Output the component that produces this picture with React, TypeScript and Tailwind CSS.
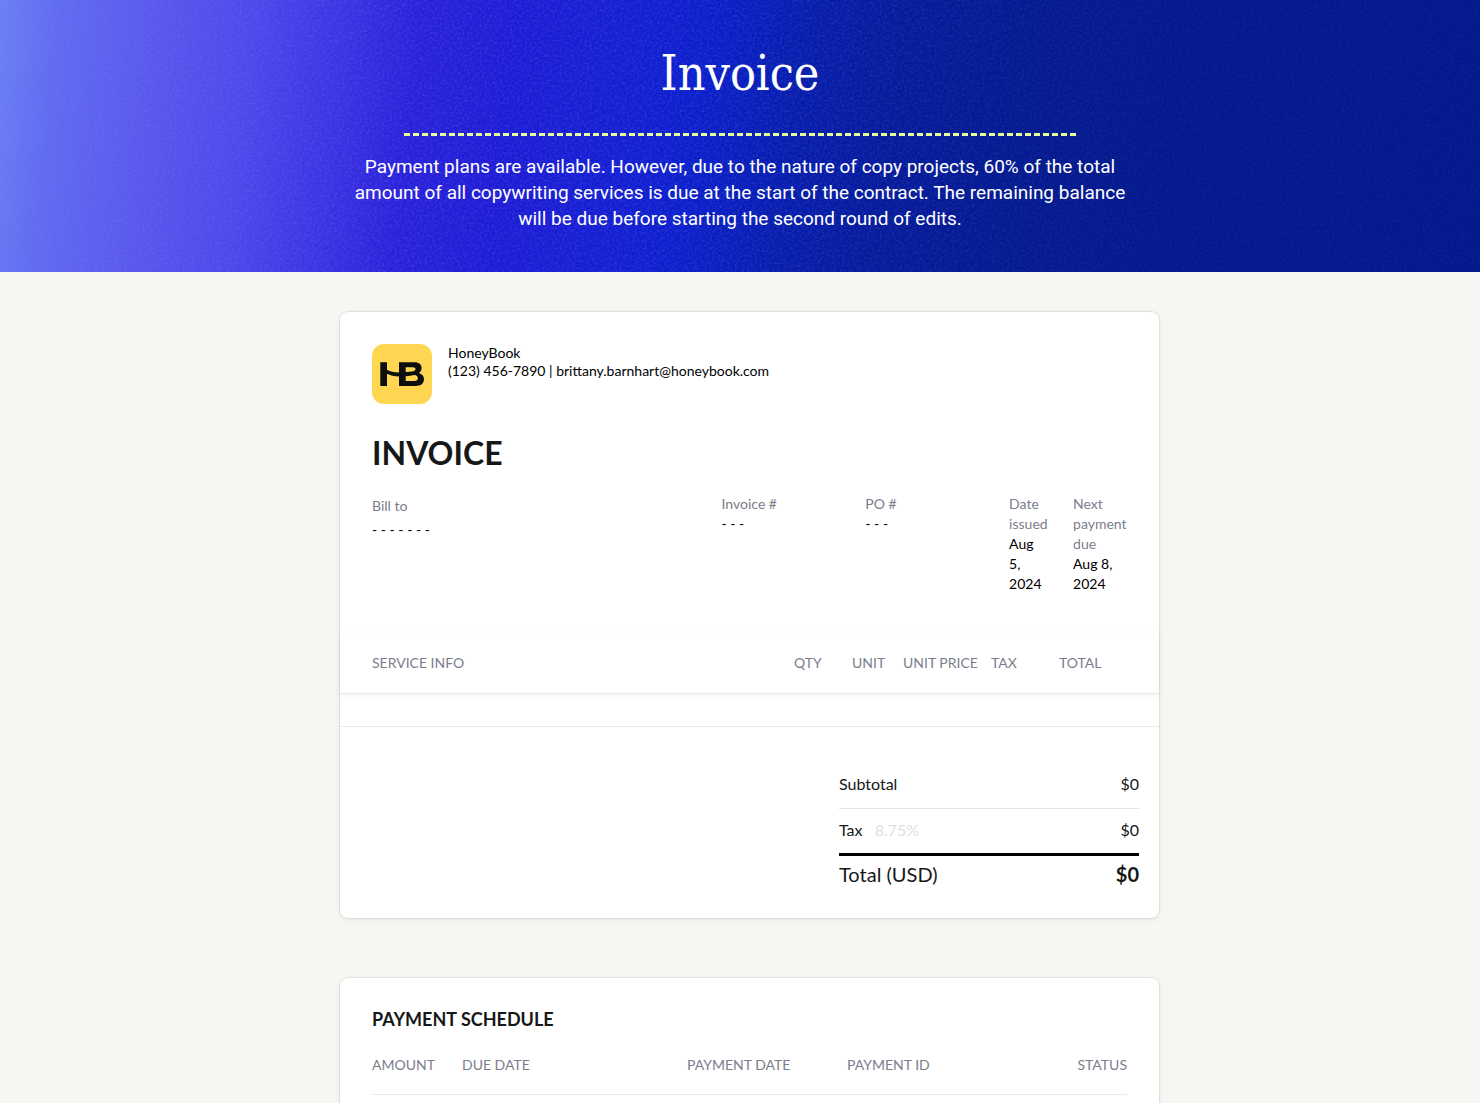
import React from 'react';

const serviceColumns: { label: string; className: string }[] = [
  { label: 'SERVICE INFO', className: 'pl-8' },
  { label: 'QTY', className: 'w-[58px]' },
  { label: 'UNIT', className: 'w-[51px]' },
  { label: 'UNIT PRICE', className: 'w-[88px]' },
  { label: 'TAX', className: 'w-[68px]' },
  { label: 'TOTAL', className: 'w-[100px]' },
];

const scheduleColumns: { label: string; className: string }[] = [
  { label: 'AMOUNT', className: 'w-[90px] text-left' },
  { label: 'DUE DATE', className: 'w-[225px] text-left' },
  { label: 'PAYMENT DATE', className: 'w-[160px] text-left' },
  { label: 'PAYMENT ID', className: 'text-left' },
  { label: 'STATUS', className: 'text-right' },
];

const Grain: React.FC = () => (
  <svg
    className="absolute inset-0 h-full w-full opacity-12 [mask-image:linear-gradient(97deg,rgba(0,0,0,0.5)_0%,black_25%,black_50%,rgba(0,0,0,0.4)_80%)]"
    aria-hidden="true"
  >
    <filter id="grain" x="0" y="0" width="100%" height="100%">
      <feTurbulence type="fractalNoise" baseFrequency="0.4" numOctaves="3" />
      <feColorMatrix type="matrix" values="0 0 0 0 0.5  0 0 0 0 0.5  0 0 0 0 1  2.4 0 0 0 -0.95" />
    </filter>
    <rect width="100%" height="100%" filter="url(#grain)" />
  </svg>
);

const Logo: React.FC = () => (
  <svg viewBox="0 0 60 60" className="size-[60px] shrink-0" role="img" aria-label="HoneyBook logo">
    <rect width="60" height="60" rx="12" fill="#ffd651" />
    <path
      fill="#0d0f0e"
      fillRule="evenodd"
      d="M8.3 18.2H15V25.8C18 27.6 22 28.5 27 28.5V18.2H42.5C47 18.2 49.6 20.6 49.6 24C49.6 26.3 48.5 28.1 46.8 29.1C50 30 52 32.2 52 35.2C52 39.4 48.7 41.9 43.6 41.9H27V32.4C22.3 32.4 18.2 31.4 15 29.8V41.9H8.3ZM33.7 23.2V28.1C36.5 28 39 27.7 41.3 27.2C43 26.8 43.5 26.1 43.5 25.1C43.5 23.9 42.6 23.2 41 23.2ZM33.7 32.2V36.9H42.4C44.7 36.9 45.8 36.1 45.8 34.3C45.8 32.5 44.5 31.2 42.3 31.1C39.6 31.7 36.7 32.1 33.7 32.2Z"
    />
  </svg>
);

const Field: React.FC<{ label: string; value: string; className: string }> = ({ label, value, className }) => (
  <div className={className}>
    <dt className="text-[#7b7d8c]">{label}</dt>
    <dd className="pr-1 text-black">{value}</dd>
  </div>
);

const Hero: React.FC = () => (
  <header className="relative bg-[linear-gradient(96deg,#6c80f3_0%,#616bf1_4%,#5a59ee_10%,#4e47ea_17%,#3b32e3_23%,#2921da_28%,#1e1cd6_34%,#141fd2_42%,#0b1fcb_47%,#061dae_53%,#051b9a_60%,#041a8e_70%,#03188c_100%)]">
    <Grain />
    <div className="relative mx-auto flex max-w-[800px] flex-col items-center px-2 pt-10 pb-10 text-center text-white">
      <h1 className="font-['DejaVu_Serif_Condensed','DejaVu_Serif',serif] text-5xl leading-[67px]">Invoice</h1>
      <div className="mt-[26px] mb-[18px] w-full max-w-[672px] border-t-[3px] border-dashed border-[#e6ff9a]" />
      <p className="font-[Roboto,sans-serif] text-[19px] leading-[26px]">
        Payment plans are available. However, due to the nature of copy projects, 60% of the total amount of all
        copywriting services is due at the start of the contract. The remaining balance will be due before starting the
        second round of edits.
      </p>
    </div>
  </header>
);

const InvoiceCard: React.FC = () => (
  <section className="rounded-lg bg-white shadow-[0_0_1px_1px_rgba(0,0,0,0.08),0_2px_6px_rgba(0,0,0,0.06)]">
    <div className="px-8 pt-8">
      <div className="flex gap-4">
        <Logo />
        <div className="text-sm leading-[18px] text-black">
          <p>HoneyBook</p>
          <p>(123) 456-7890 | brittany.barnhart@honeybook.com</p>
        </div>
      </div>
      <h2 className="mt-7 text-[32px] leading-[42px] font-bold">INVOICE</h2>
      <dl className="mt-5 flex h-[139px] text-sm leading-5">
        <Field label="Bill to" value="- - - - - - -" className="w-[350px] leading-6" />
        <Field label="Invoice #" value="- - -" className="w-36" />
        <Field label="PO #" value="- - -" className="w-36" />
        <Field label="Date issued" value="Aug 5, 2024" className="mr-6 w-10" />
        <Field label="Next payment due" value="Aug 8, 2024" className="w-[54px]" />
      </dl>
    </div>
    <table className="w-full table-fixed text-left text-sm text-[#7b7d8c]">
      <thead className="shadow-[0_2px_6px_rgba(0,0,0,0.06)]">
        <tr className="h-[60px] border-b border-[#e8e8ea]">
          {serviceColumns.map(column => (
            <th key={column.label} scope="col" className={`font-normal ${column.className}`}>
              {column.label}
            </th>
          ))}
        </tr>
      </thead>
      <tbody>
        <tr className="h-[33px] border-b border-[#ebebed]">
          <td colSpan={6} />
        </tr>
      </tbody>
    </table>
    <dl className="mr-5 ml-auto w-[300px] pt-9 pb-[30px]">
      <div className="flex h-[46px] items-center justify-between border-b border-[#e3e3e6] pb-0.5">
        <dt>Subtotal</dt>
        <dd>$0</dd>
      </div>
      <div className="flex h-[47px] items-center justify-between border-b-[3px] border-black pb-0.5">
        <dt>
          Tax <span className="ml-2 text-[#dedfe3]">8.75%</span>
        </dt>
        <dd>$0</dd>
      </div>
      <div className="flex h-8 items-end justify-between text-xl leading-7">
        <dt>Total (USD)</dt>
        <dd className="font-bold">$0</dd>
      </div>
    </dl>
  </section>
);

const ScheduleCard: React.FC = () => (
  <section className="flex-1 rounded-t-lg bg-white px-8 pt-7 shadow-[0_0_1px_1px_rgba(0,0,0,0.08),0_2px_6px_rgba(0,0,0,0.06)]">
    <h2 className="text-lg leading-[26px] font-bold">PAYMENT SCHEDULE</h2>
    <table className="w-full table-fixed text-sm text-[#7b7d8c]">
      <thead>
        <tr className="h-[63px] border-b border-[#ebebed]">
          {scheduleColumns.map(column => (
            <th key={column.label} scope="col" className={`pt-1 font-normal ${column.className}`}>
              {column.label}
            </th>
          ))}
        </tr>
      </thead>
    </table>
  </section>
);

const App: React.FC = () => (
  <div className="flex min-h-screen flex-col bg-[#f7f6f2] font-[Lato,sans-serif] text-[#161718]">
    <Hero />
    <main className="mx-auto flex w-full max-w-[840px] flex-1 flex-col gap-[60px] pt-10 pr-px pl-5">
      <InvoiceCard />
      <ScheduleCard />
    </main>
  </div>
);

export default App;
